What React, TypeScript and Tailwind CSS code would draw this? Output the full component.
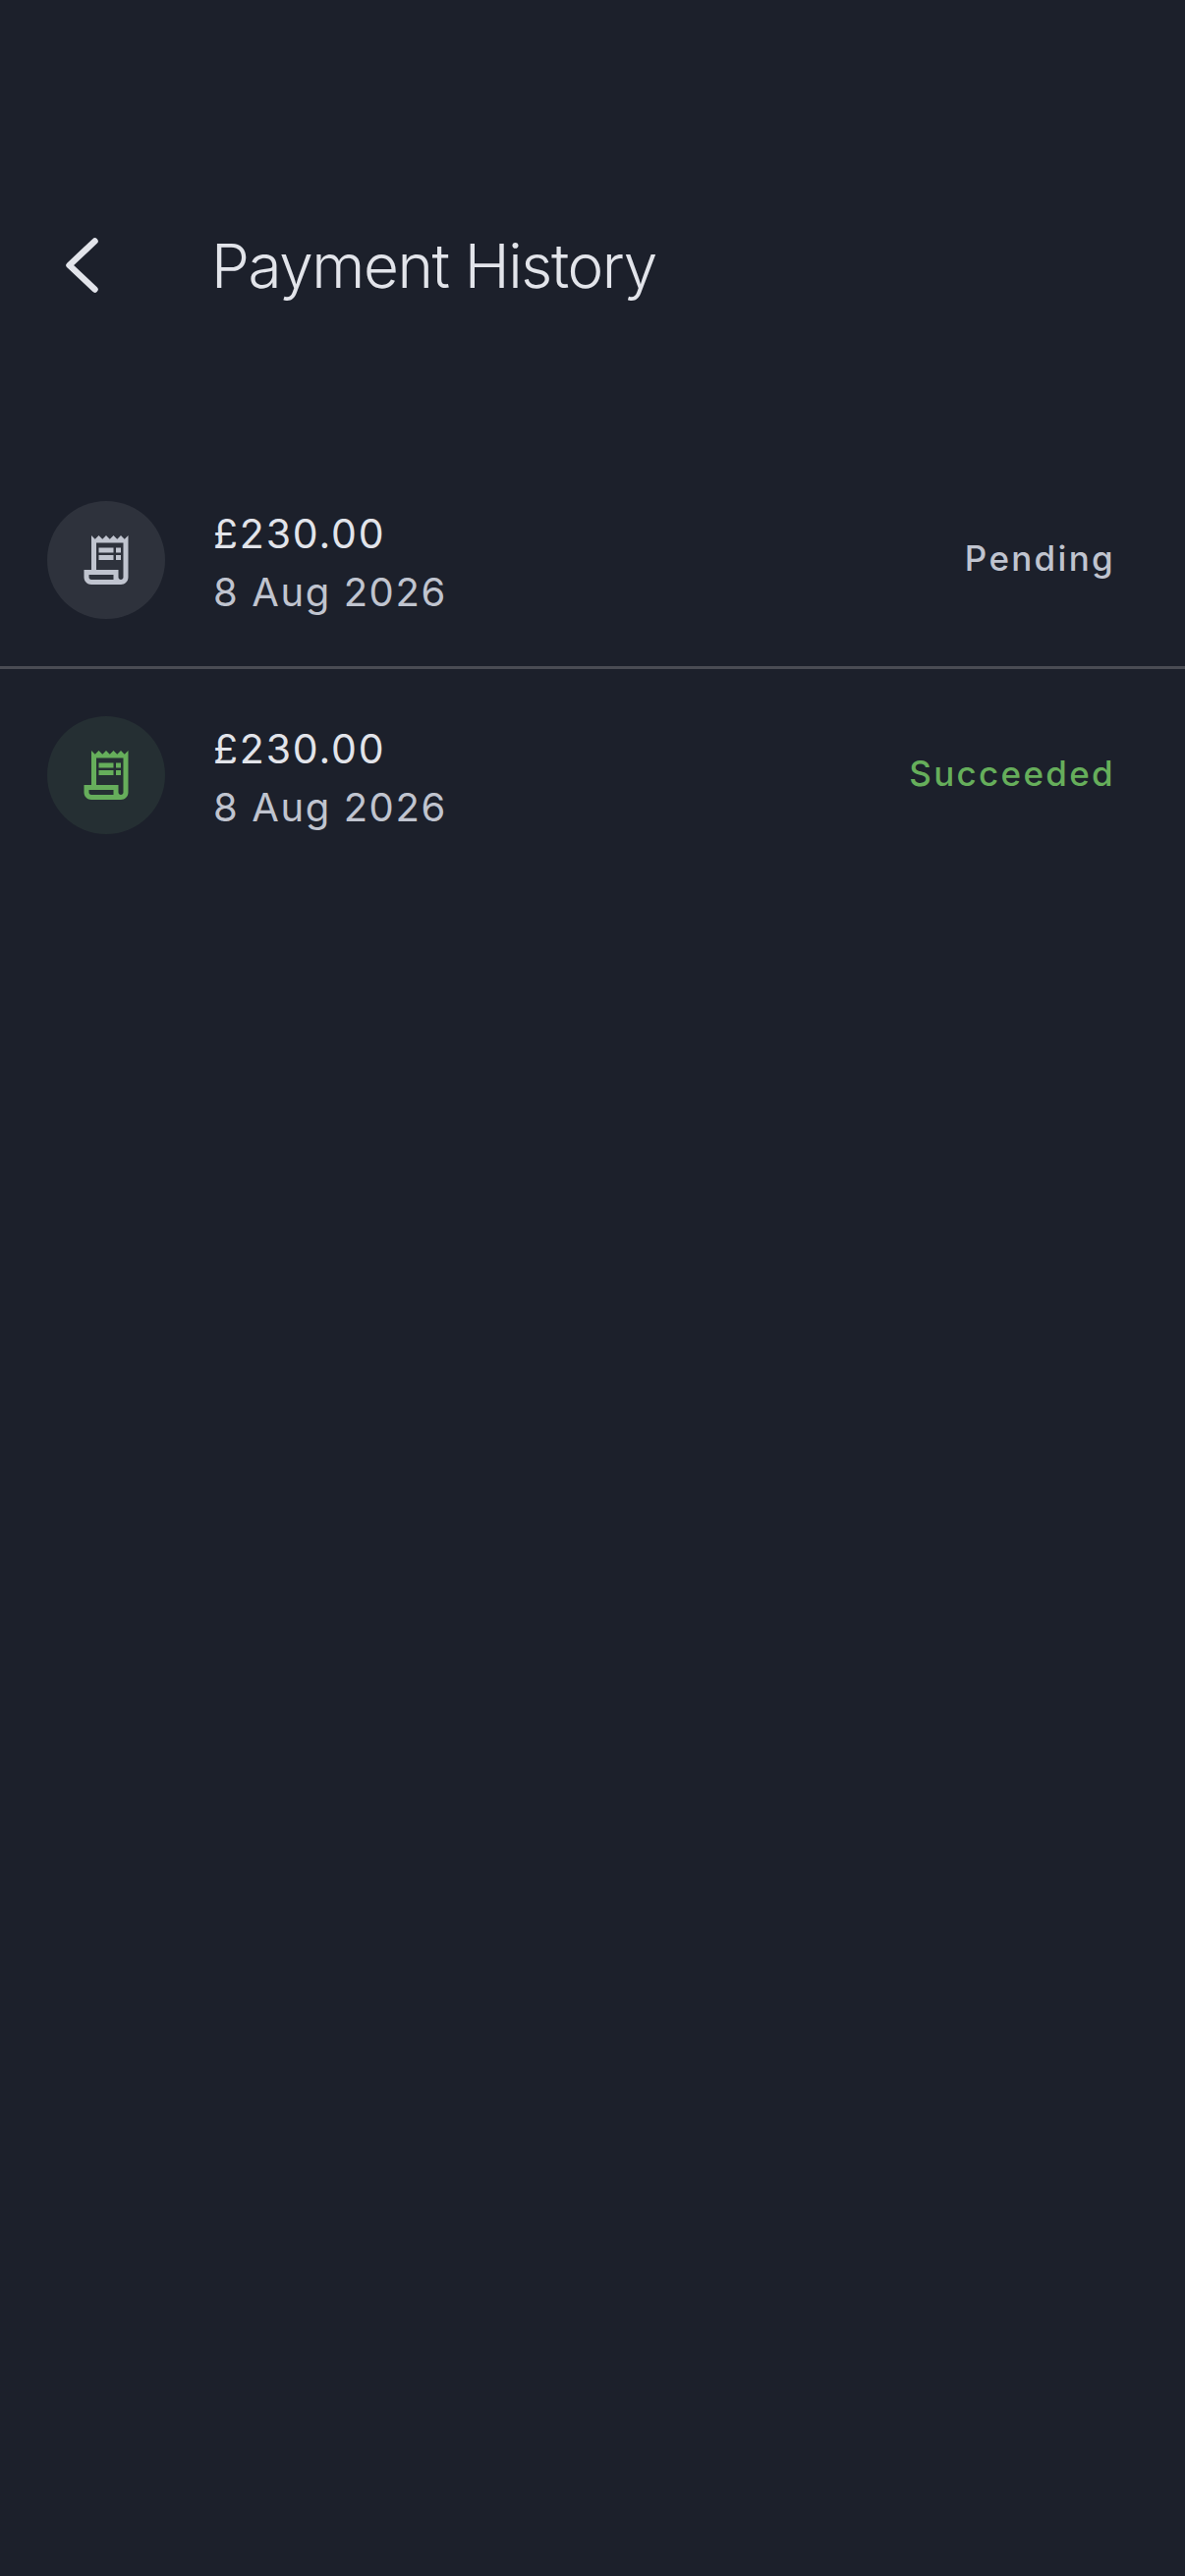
const font = "font-['Inter','Noto_Sans',sans-serif]";

function ReceiptIcon({ className }: { className: string }) {
  return (
    <svg viewBox="0 0 24 24" fill="currentColor" className={className}>
      <path d="M19.5 3.5 18 2l-1.5 1.5L15 2l-1.5 1.5L12 2l-1.5 1.5L9 2 7.5 3.5 6 2v14H3v3c0 1.66 1.34 3 3 3h12c1.66 0 3-1.34 3-3V2l-1.5 1.5zM15 20H6c-.55 0-1-.45-1-1v-1h10v2zm4-1c0 .55-.45 1-1 1s-1-.45-1-1v-3H8V5h11v14z" />
      <path d="M9 7h6v2H9zM16 7h2v2h-2zM9 10h6v2H9zM16 10h2v2h-2z" />
    </svg>
  );
}

const payments = [
  {
    amount: '£230.00',
    date: '8 Aug 2026',
    status: 'Pending',
    circle: 'bg-[#2e323c]',
    icon: 'text-[#c0c4cf]',
    statusColor: 'text-[#c0c4cf]',
    row: 'pt-[49px] pb-[48px] border-b-[3px] border-[#4a4c54]',
  },
  {
    amount: '£230.00',
    date: '8 Aug 2026',
    status: 'Succeeded',
    circle: 'bg-[#252f33]',
    icon: 'text-[#66ae5b]',
    statusColor: 'text-[#66ae5b]',
    row: 'pt-[48px] pb-[49px]',
  },
];

export default function App() {
  return (
    <div className={`min-h-[2622px] bg-[#1c202b] ${font}`}>
      <div className="h-[461px] pt-[242px] pl-[67px]">
        <div className="flex items-center h-[56px]">
          <svg viewBox="0 0 33 56" fill="none" className="w-[33px] h-[56px] text-[#e2e4ea]">
            <path d="M29.5 3.5 3.5 28l26 24.5" stroke="currentColor" strokeWidth="6.5" strokeLinecap="round" strokeLinejoin="round" />
          </svg>
          <h1 className="ml-[115px] mt-[2px] text-[62px] leading-none font-light tracking-[-1.4px] text-[#e2e4ea]">
            Payment History
          </h1>
        </div>
      </div>

      <div>
        {payments.map((p) => (
          <div key={p.status} className={`flex items-center pl-[48px] pr-[71px] ${p.row}`}>
            <div className={`flex items-center justify-center w-[120px] h-[120px] rounded-full ${p.circle}`}>
              <ReceiptIcon className={`w-[60px] h-[60px] ${p.icon}`} />
            </div>
            <div className="flex-1 ml-[49px] h-[120px] pt-[3px]">
              <div className="text-[41px] leading-[60px] tracking-[1.8px] text-[#e2e4ea]">{p.amount}</div>
              <div className="text-[40px] leading-[60px] tracking-[1.6px] text-[#c0c4cf]">{p.date}</div>
            </div>
            <div className={`mb-[3px] text-[35px] font-medium tracking-[2.3px] ${p.statusColor}`}>{p.status}</div>
          </div>
        ))}
      </div>
    </div>
  );
}
